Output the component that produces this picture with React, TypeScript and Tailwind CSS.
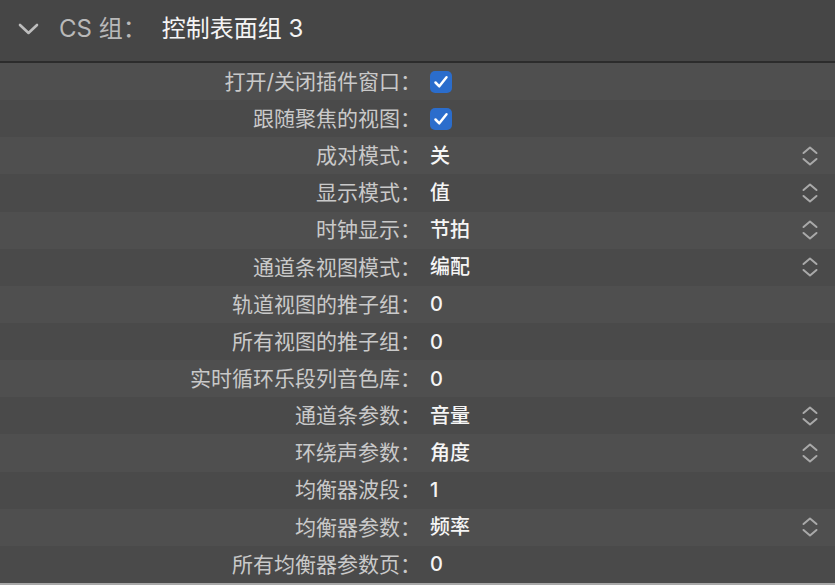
const rows: { label: string; value?: string; check?: boolean; stepper?: boolean }[] = [
  { label: '打开/关闭插件窗口', check: true },
  { label: '跟随聚焦的视图', check: true },
  { label: '成对模式', value: '关', stepper: true },
  { label: '显示模式', value: '值', stepper: true },
  { label: '时钟显示', value: '节拍', stepper: true },
  { label: '通道条视图模式', value: '编配', stepper: true },
  { label: '轨道视图的推子组', value: '0' },
  { label: '所有视图的推子组', value: '0' },
  { label: '实时循环乐段列音色库', value: '0' },
  { label: '通道条参数', value: '音量', stepper: true },
  { label: '环绕声参数', value: '角度', stepper: true },
  { label: '均衡器波段', value: '1' },
  { label: '均衡器参数', value: '频率', stepper: true },
  { label: '所有均衡器参数页', value: '0' },
];

function Stepper() {
  return (
    <svg width="18" height="22" viewBox="0 0 18 22" fill="none" stroke="#a9a9a9" strokeWidth="2" strokeLinecap="round" strokeLinejoin="round">
      <path d="M2.5 8 L9 2.5 L15.5 8" />
      <path d="M2.5 14 L9 19.5 L15.5 14" />
    </svg>
  );
}

function Checkbox() {
  return (
    <div className="flex h-[22px] w-[22px] items-center justify-center rounded-[5px] bg-[#2b6dcc]">
      <svg width="18" height="18" viewBox="0 0 18 18" fill="none" stroke="white" strokeWidth="2.5" strokeLinecap="round" strokeLinejoin="round">
        <path d="M3.5 9.5 L7.3 13.3 L14.5 4.3" />
      </svg>
    </div>
  );
}

export default function App() {
  return (
    <div
      className="flex h-screen w-full flex-col bg-[#4a4a4a]"
      style={{ fontFamily: 'Inter, "Noto Sans CJK SC", sans-serif' }}
    >
      {/* Header */}
      <div className="flex h-[61px] shrink-0 items-center bg-[#464646] pb-[4px] pl-[18px]">
        <svg width="21" height="12" viewBox="0 0 21 12" fill="none" stroke="#bdbdbd" strokeWidth="2.6" strokeLinecap="round" strokeLinejoin="round">
          <path d="M2 2 L10.5 10 L19 2" />
        </svg>
        <span className="ml-[20px] text-[24px] text-[#b9b9b9]">CS 组：</span>
        <span className="ml-[15px] text-[24px] text-[#f4f4f4]">控制表面组 3</span>
      </div>
      <div className="h-[2px] shrink-0 bg-[#2c2c2c]" />

      <div className="flex flex-1 flex-col">
        {rows.map((r, i) => (
          <div
            key={r.label}
            className={`flex flex-1 items-center ${i % 2 === 0 ? 'bg-[#4f4f4f]' : 'bg-[#4a4a4a]'}`}
          >
            <div className="w-[421px] shrink-0 text-right text-[21px] text-[#c9c9c9]">{r.label}：</div>
            <div className="ml-[9px] flex flex-1 items-center text-[20px] font-medium text-[#f5f5f5]">
              {r.check ? <Checkbox /> : r.value}
            </div>
            {r.stepper && (
              <div className="mr-[16px] flex items-center">
                <Stepper />
              </div>
            )}
          </div>
        ))}
      </div>
      <div className="h-[2px] shrink-0 bg-[#a8a8a8]" />
    </div>
  );
}
